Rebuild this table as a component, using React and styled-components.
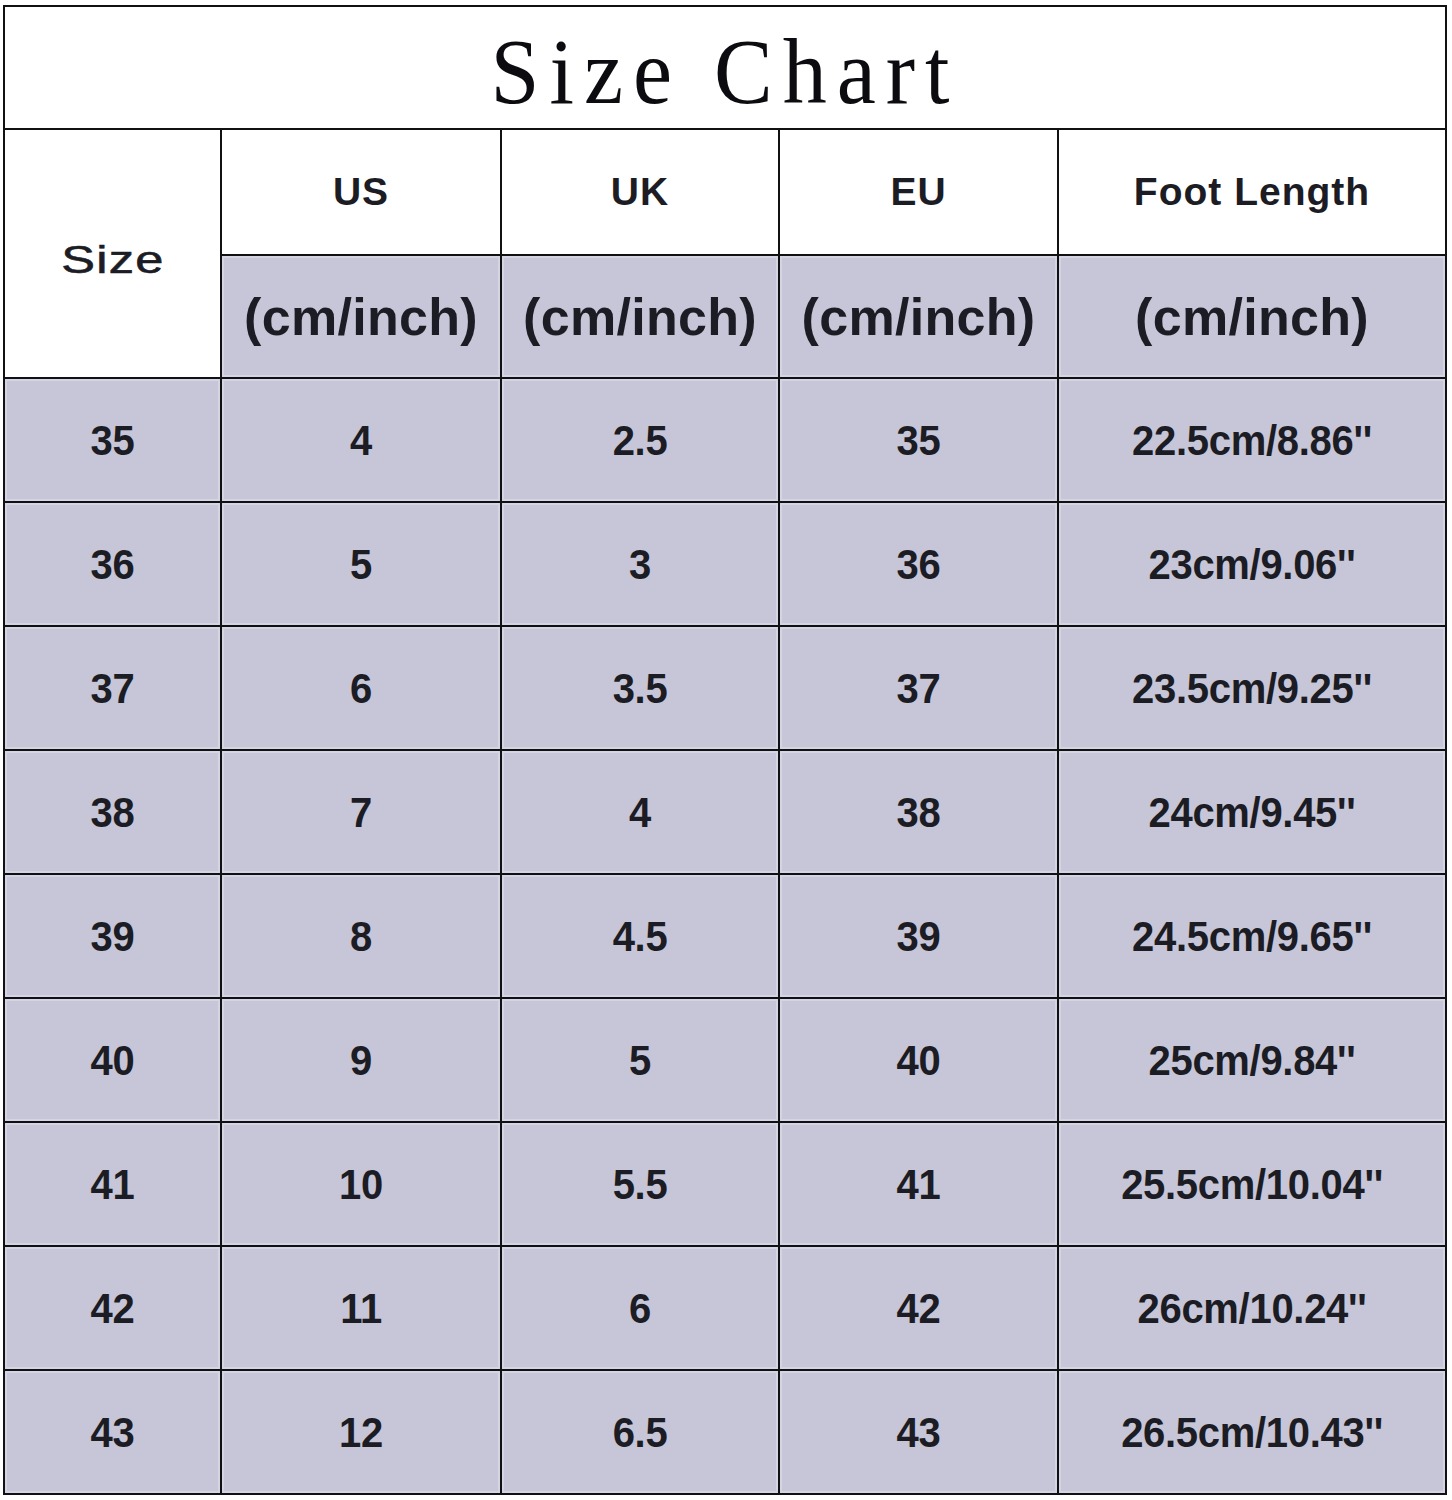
import React from "react";
import styled, { createGlobalStyle } from "styled-components";

const Global = createGlobalStyle`
  html, body { margin: 0; padding: 0; background: #ffffff; }
  body { font-family: "Liberation Sans", Arial, sans-serif; }
`;

const Page = styled.div`
  padding: 5px 0 0 3px;
  width: 1452px;
  box-sizing: border-box;
`;

const Table = styled.div`
  display: grid;
  width: 1444px;
  box-sizing: border-box;
  grid-template-columns: 215px 278px 276px 277px 386px;
  grid-template-rows: 121px 124px 121px repeat(9, 122px);
  gap: 2px;
  padding: 2px;
  background: #111114;
`;

const TitleCell = styled.div`
  grid-column: 1 / -1;
  background: #ffffff;
  display: flex;
  align-items: center;
  justify-content: center;
  padding-top: 10px;
  box-sizing: border-box;
`;

const Title = styled.h1`
  margin: 0;
  font-family: "Liberation Serif", "Times New Roman", serif;
  font-weight: 400;
  font-size: 88px;
  letter-spacing: 10px;
  line-height: 1;
  color: #0c0c10;
  transform: scaleY(1.05);
`;

const Cell = styled.div`
  background: ${(p) => (p.$light ? "#ffffff" : "#c6c6d8")};
  box-shadow: ${(p) => (p.$light ? "none" : "inset 0 0 0 2px #d4d4e2")};
  display: flex;
  align-items: center;
  justify-content: center;
  color: #1c1c24;
  font-weight: 700;
  white-space: nowrap;
  box-sizing: border-box;
`;

const SizeHead = styled(Cell)`
  grid-row: span 2;
  padding-top: 14px;
`;

const SizeLabel = styled.span`
  font-size: 38px;
  font-weight: 400;
  -webkit-text-stroke: 0.6px #1c1c24;
  letter-spacing: 1px;
  display: inline-block;
  transform: scaleX(1.33);
`;

const HeadLabel = styled.span`
  font-size: 39px;
  letter-spacing: 1px;
`;

const UnitLabel = styled.span`
  font-size: 52px;
  letter-spacing: 0.3px;
`;

const Value = styled.span`
  font-size: 40px;
  letter-spacing: -0.3px;
  display: inline-block;
  transform: scaleY(1.08);
`;

const rows = [
  ["35", "4", "2.5", "35", "22.5cm/8.86''"],
  ["36", "5", "3", "36", "23cm/9.06''"],
  ["37", "6", "3.5", "37", "23.5cm/9.25''"],
  ["38", "7", "4", "38", "24cm/9.45''"],
  ["39", "8", "4.5", "39", "24.5cm/9.65''"],
  ["40", "9", "5", "40", "25cm/9.84''"],
  ["41", "10", "5.5", "41", "25.5cm/10.04''"],
  ["42", "11", "6", "42", "26cm/10.24''"],
  ["43", "12", "6.5", "43", "26.5cm/10.43''"],
];

const heads = ["US", "UK", "EU", "Foot Length"];

export default function App() {
  return (
    <>
      <Global />
      <Page>
        <Table>
          <TitleCell>
            <Title>Size Chart</Title>
          </TitleCell>
          <SizeHead $light>
            <SizeLabel>Size</SizeLabel>
          </SizeHead>
          {heads.map((h) => (
            <Cell $light key={h}>
              <HeadLabel>{h}</HeadLabel>
            </Cell>
          ))}
          {heads.map((h) => (
            <Cell key={h + "u"}>
              <UnitLabel>(cm/inch)</UnitLabel>
            </Cell>
          ))}
          {rows.map((r) =>
            r.map((v, i) => (
              <Cell key={r[0] + "-" + i}>
                <Value>{v}</Value>
              </Cell>
            ))
          )}
        </Table>
      </Page>
    </>
  );
}
